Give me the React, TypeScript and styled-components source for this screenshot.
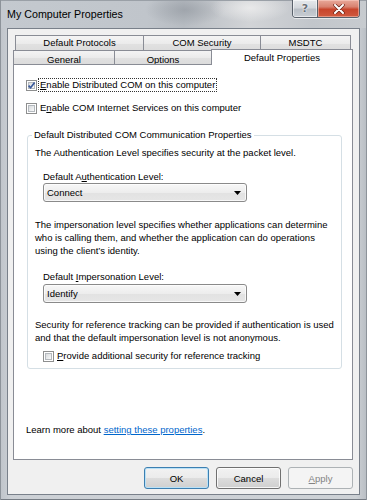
import React from 'react';
import styled, { createGlobalStyle } from 'styled-components';

const GlobalStyle = createGlobalStyle`
  html, body { margin: 0; padding: 0; background: #ffffff; }
  body { font-family: "Liberation Sans", Arial, sans-serif; }
`;

const Window = styled.div`
  width: 367px;
  height: 500px;
  box-sizing: border-box;
  display: flex;
  flex-direction: column;
  padding: 0 7px 5px 7px;
  overflow: hidden;
  background: linear-gradient(90deg, #bfc4ca 0%, #ccd0d5 3%, #cdd1d5 97%, #b8bdc3 100%);
  box-shadow: inset 1px 0 0 #8d939a, inset -1px 0 0 #8d939a, inset 0 -1px 0 #767c84;
  font-family: "Liberation Sans", Arial, sans-serif;
  font-size: 9.5px;
  color: #000;
`;

const TitleBar = styled.div`
  flex: none;
  height: 28px;
  margin: 0 -7px;
  padding: 0 7px 0 7px;
  display: flex;
  align-items: flex-start;
  background:
    radial-gradient(ellipse 40px 14px at 250px 8px, rgba(240, 240, 240, 0.75), rgba(240, 240, 240, 0) 100%),
    radial-gradient(ellipse 40px 16px at 185px 10px, rgba(140, 146, 154, 0.55), rgba(140, 146, 154, 0) 100%),
    linear-gradient(90deg, #c4c9cf 0%, #c0c5cb 40%, #b7bcc2 50%, #d2d4d7 68%, #c2c6cb 85%, #c7cbcf 100%);
  box-shadow: inset 1px 0 0 #8d939a, inset -1px 0 0 #8d939a, inset 0 1px 0 #9aa0a7;
`;

const Title = styled.span`
  flex: 1;
  font-size: 10.7px;
  line-height: 28px;
  color: #000;
  white-space: nowrap;
`;

const CaptionButtons = styled.div`
  display: flex;
  height: 17px;
  border: 1px solid #59616b;
  border-top: none;
  border-radius: 0 0 4px 4px;
  overflow: hidden;
  box-shadow: 0 1px 0 rgba(255, 255, 255, 0.6);
`;

const HelpButton = styled.div`
  width: 24px;
  border-right: 1px solid #59616b;
  background: linear-gradient(#e6e9ec 0%, #d3d7dc 45%, #b9bfc6 55%, #c8cdd3 100%);
  box-shadow: inset 0 0 0 1px rgba(255, 255, 255, 0.55);
  display: flex;
  align-items: center;
  justify-content: center;
  font-family: "DejaVu Sans", sans-serif;
  font-weight: bold;
  font-size: 11px;
  color: #6a7078;
  text-shadow: 0 0 1px #fff, 0 0 2px #fff;
`;

const CloseButton = styled.div`
  width: 41px;
  background: linear-gradient(#e9a99a 0%, #d88270 40%, #c8452c 55%, #d05a3f 100%);
  box-shadow: inset 0 0 0 1px rgba(255, 220, 210, 0.45);
  display: flex;
  align-items: center;
  justify-content: center;
`;

const Client = styled.div`
  flex: 1;
  min-height: 0;
  display: flex;
  flex-direction: column;
  background: #f0f0f0;
  border: 1px solid #79808a;
  padding: 6px 6px 5px 5px;
`;

const TabStrip = styled.div`
  flex: none;
  height: 29px;
  display: flex;
  flex-direction: column;
`;

const TabRow = styled.div<{ $indent?: number; $second?: boolean }>`
  display: flex;
  height: ${(p) => (p.$second ? 14 : 16)}px;
  margin-top: ${(p) => (p.$second ? -1 : 0)}px;
  padding-left: ${(p) => p.$indent ?? 0}px;
`;

const Tab = styled.div<{ $w: number; $selected?: boolean; $pt: number }>`
  width: ${(p) => p.$w}px;
  box-sizing: border-box;
  height: ${(p) => (p.$selected ? '16px' : '100%')};
  margin-top: ${(p) => (p.$selected ? -1 : 0)}px;
  margin-left: -1px;
  &:first-child { margin-left: 0; }
  position: relative;
  z-index: ${(p) => (p.$selected ? 2 : 0)};
  border: 1px solid #898c95;
  border-bottom: none;
  background: ${(p) =>
    p.$selected ? '#ffffff' : 'linear-gradient(#f4f4f4 0%, #ebebeb 50%, #e1e1e1 51%, #dcdcdc 100%)'};
  padding-top: ${(p) => p.$pt}px;
  text-align: center;
  line-height: 11px;
  white-space: nowrap;
  overflow: hidden;
`;

const Panel = styled.div`
  flex: 1;
  min-height: 0;
  background: #ffffff;
  border: 1px solid #898c95;
  display: flex;
  flex-direction: column;
  align-items: flex-start;
  padding: 13px 10px 0 12px;
`;

const CheckRow = styled.div<{ $mt?: number; $indent?: number }>`
  display: flex;
  align-items: center;
  gap: 1px;
  height: 14px;
  margin-top: ${(p) => p.$mt ?? 0}px;
  margin-left: ${(p) => p.$indent ?? 0}px;
`;

const CheckBox = styled.span`
  flex: none;
  width: 11px;
  height: 11px;
  box-sizing: border-box;
  border: 1px solid #8e8f8f;
  background: #ffffff;
  display: flex;
  align-items: center;
  justify-content: center;
`;

const CheckInner = styled.span`
  width: 7px;
  height: 7px;
  box-sizing: border-box;
  border: 1px solid #b4b9be;
  background: linear-gradient(135deg, #d9dbdd 0%, #eef0f1 70%, #fbfbfb 100%);
  display: flex;
  align-items: center;
  justify-content: center;
  overflow: visible;
`;

const CheckLabel = styled.span<{ $focus?: boolean }>`
  border: 1px dotted ${(p) => (p.$focus ? '#333' : 'transparent')};
  padding: 0 1px;
  line-height: 12px;
  white-space: nowrap;
`;

const GroupBox = styled.div`
  align-self: stretch;
  margin: 20px 0 0 1px;
  border: 1px solid #d5dfe5;
  border-radius: 3px;
  padding: 0 7px 5px 7px;
  display: flex;
  flex-direction: column;
  align-items: flex-start;
`;

const GroupTitle = styled.span`
  margin: -8px 0 0 -3px;
  padding: 0 2px;
  background: #ffffff;
  line-height: 13px;
  white-space: nowrap;
`;

const Text = styled.div<{ $mt: number; $indent?: number; $lh?: number }>`
  margin-top: ${(p) => p.$mt}px;
  margin-left: ${(p) => p.$indent ?? 0}px;
  line-height: ${(p) => p.$lh ?? 13}px;
  white-space: nowrap;
`;

const Select = styled.div<{ $mt: number }>`
  margin: ${(p) => p.$mt}px 0 0 8px;
  width: 204px;
  height: 19px;
  box-sizing: border-box;
  border: 1px solid #8a8a8a;
  border-radius: 3px;
  background: linear-gradient(#f7f7f7 0%, #ededed 50%, #e2e2e2 51%, #e6e6e6 100%);
  box-shadow: inset 0 0 0 1px rgba(255, 255, 255, 0.7);
  display: flex;
  align-items: center;
  padding: 0 5px 0 3px;
`;

const SelectValue = styled.span`
  flex: 1;
  line-height: 13px;
`;

const Link = styled.span`
  color: #0066cc;
  text-decoration: underline;
`;

const ButtonRow = styled.div`
  flex: none;
  height: 22px;
  margin-top: 7px;
  display: flex;
  justify-content: flex-end;
  gap: 7px;
`;

const Button = styled.div<{ $variant?: 'default' | 'disabled' }>`
  width: 65px;
  height: 22px;
  box-sizing: border-box;
  border-radius: 3px;
  display: flex;
  align-items: center;
  justify-content: center;
  border: 1px solid
    ${(p) => (p.$variant === 'default' ? '#3c7fb1' : p.$variant === 'disabled' ? '#adb2b5' : '#707070')};
  background: ${(p) =>
    p.$variant === 'disabled'
      ? '#f4f4f4'
      : 'linear-gradient(#f2f2f2 0%, #ebebeb 50%, #dddddd 51%, #cfcfcf 100%)'};
  box-shadow: ${(p) =>
    p.$variant === 'default'
      ? 'inset 0 0 0 1px #b9e1f7'
      : p.$variant === 'disabled'
      ? 'none'
      : 'inset 0 0 0 1px rgba(255,255,255,0.8)'};
  color: ${(p) => (p.$variant === 'disabled' ? '#838383' : '#000')};
  font-size: 9.5px;
`;

const Arrow = () => (
  <svg width="7" height="4" viewBox="0 0 7 4">
    <path d="M0 0 H7 L3.5 4 Z" fill="#000" />
  </svg>
);

const Check = ({ checked }: { checked?: boolean }) => (
  <CheckBox>
    <CheckInner>
      {checked && (
        <svg width="9" height="9" viewBox="0 0 9 9" style={{ margin: '-2px' }}>
          <path d="M1.6 4.6 L3.6 6.8 L7.6 1.6" fill="none" stroke="#3a5a9c" strokeWidth="1.7" />
        </svg>
      )}
    </CheckInner>
  </CheckBox>
);

export default function App() {
  return (
    <>
      <GlobalStyle />
      <Window>
        <TitleBar>
          <Title>My Computer Properties</Title>
          <CaptionButtons>
            <HelpButton>?</HelpButton>
            <CloseButton>
              <svg width="12" height="10" viewBox="0 0 12 10">
                <path d="M2 1 L10 9 M10 1 L2 9" stroke="#6b2418" strokeWidth="3.4" strokeLinecap="round" />
                <path d="M2 1 L10 9 M10 1 L2 9" stroke="#ffffff" strokeWidth="2" strokeLinecap="round" />
              </svg>
            </CloseButton>
          </CaptionButtons>
        </TitleBar>
        <Client>
          <TabStrip>
            <TabRow $indent={2}>
              <Tab $w={129} $pt={1}>Default Protocols</Tab>
              <Tab $w={118} $pt={1}>COM Security</Tab>
              <Tab $w={91} $pt={1}>MSDTC</Tab>
            </TabRow>
            <TabRow $second>
              <Tab $w={102} $pt={3}>General</Tab>
              <Tab $w={98} $pt={3}>Options</Tab>
              <Tab $w={142} $pt={2} $selected>Default Properties</Tab>
            </TabRow>
          </TabStrip>
          <Panel>
            <CheckRow>
              <Check checked />
              <CheckLabel $focus>
                <u>E</u>nable Distributed COM on this computer
              </CheckLabel>
            </CheckRow>
            <CheckRow $mt={9}>
              <Check />
              <CheckLabel>
                E<u>n</u>able COM Internet Services on this computer
              </CheckLabel>
            </CheckRow>
            <GroupBox>
              <GroupTitle>Default Distributed COM Communication Properties</GroupTitle>
              <Text $mt={5}>The Authentication Level specifies security at the packet level.</Text>
              <Text $mt={11} $indent={8}>
                Default A<u>u</u>thentication Level:
              </Text>
              <Select $mt={0}>
                <SelectValue>Connect</SelectValue>
                <Arrow />
              </Select>
              <Text $mt={16}>
                The impersonation level specifies whether applications can determine
                <br />
                who is calling them, and whether the application can do operations
                <br />
                using the client’s identity.
              </Text>
              <Text $mt={13} $indent={8}>
                Default <u>I</u>mpersonation Level:
              </Text>
              <Select $mt={1}>
                <SelectValue>Identify</SelectValue>
                <Arrow />
              </Select>
              <Text $mt={16} $lh={12.5}>
                Security for reference tracking can be provided if authentication is used
                <br />
                and that the default impersonation level is not anonymous.
              </Text>
              <CheckRow $mt={5} $indent={8}>
                <Check />
                <CheckLabel>
                  <u>P</u>rovide additional security for reference tracking
                </CheckLabel>
              </CheckRow>
            </GroupBox>
            <Text $mt={54}>
              Learn more about <Link>setting these properties</Link>.
            </Text>
          </Panel>
          <ButtonRow>
            <Button $variant="default">OK</Button>
            <Button>Cancel</Button>
            <Button $variant="disabled">
              <span>
                <u>A</u>pply
              </span>
            </Button>
          </ButtonRow>
        </Client>
      </Window>
    </>
  );
}
